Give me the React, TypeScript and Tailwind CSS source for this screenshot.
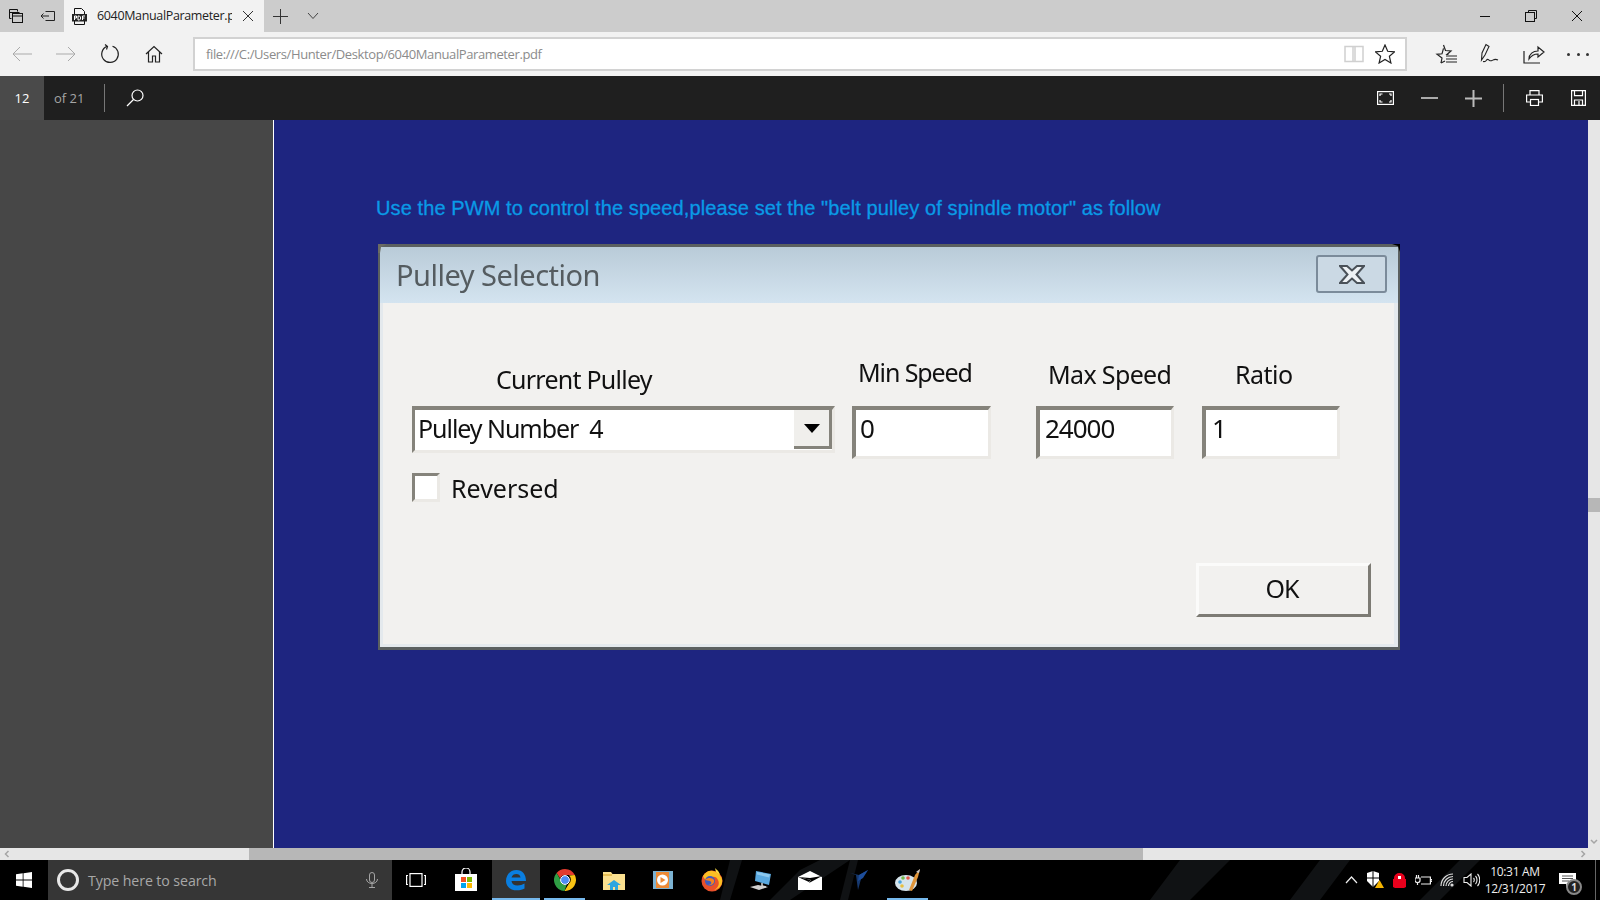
import React from "react";

const S = ({ w = 16, h = 16, vb, c = "#111", sw = 1, children }: { w?: number; h?: number; vb?: string; c?: string; sw?: number; children: React.ReactNode }) => (
  <svg width={w} height={h} viewBox={vb ?? `0 0 ${w} ${h}`} fill="none" stroke={c} strokeWidth={sw}>{children}</svg>
);

const IconBtn = ({ w = "w-11", children }: { w?: string; children: React.ReactNode }) => (
  <div className={`${w} h-full flex items-center justify-center shrink-0`}>{children}</div>
);

function TabStrip() {
  return (
    <div className="h-8 bg-[#cccccc] flex items-center shrink-0">
      <IconBtn w="w-8">
        <S><path d="M1.5 1.5h8v2M1.5 1.5v9h2M1.5 4.5h10" /><rect x="4.5" y="5.5" width="10" height="9" fill="#ccc" /><path d="M4.5 8h10" /></S>
      </IconBtn>
      <IconBtn w="w-8">
        <S c="#222"><path d="M5.5 3.5h9v9h-9M1 8h8M3.5 5.5 1 8l2.5 2.5" /></S>
      </IconBtn>
      <div className="w-[200px] h-full bg-[#f2f2f2] flex items-center shrink-0">
        <div className="ml-[7px] w-4 flex justify-center">
          <S w={15} h={17}><path d="M2.5 6V.5h7l3 3V6M2.5 13v3.5h10V13" /><rect x="0.5" y="6.5" width="14" height="6.5" fill="#222" stroke="#222" /><path d="M2.500 12V8h2v2h-2M6 8v4h1.500L8.500 11V9L7.500 8zM10.500 12V8H13M10.500 10h2" stroke="#fff" /></S>
        </div>
        <span className="ml-[10px] mt-[1px] w-[135px] overflow-hidden whitespace-nowrap text-[12.500px] text-[#222] font-['Open_Sans',sans-serif] tracking-[-0.35px]">6040ManualParameter.pdf</span>
        <div className="ml-2 w-4 flex justify-center">
          <S w={12} h={12} c="#333"><path d="M1 1l10 10M11 1 1 11" /></S>
        </div>
      </div>
      <div className="w-8 flex justify-center"><S w={15} h={15} c="#333"><path d="M7.500 0v15M0 7.500h15" /></S></div>
      <div className="w-8 ml-[1px] flex justify-center"><S w={12} h={8} c="#444"><path d="M1 1l5 5.500L11 1" /></S></div>
      <div className="flex-1" />
      <IconBtn w="w-[46px]"><S w={12} h={12} c="#111"><path d="M1 6.500h10" /></S></IconBtn>
      <IconBtn w="w-[46px]"><S w={12} h={12} c="#111"><path d="M3.500 2.500V.5h8v8h-2" /><rect x="0.5" y="2.500" width="9" height="9" fill="#ccc" /></S></IconBtn>
      <IconBtn w="w-[46px]"><S w={12} h={12} c="#111"><path d="M1 1l10 10M11 1 1 11" /></S></IconBtn>
    </div>
  );
}

function AddressRow() {
  return (
    <div className="h-11 bg-[#f2f2f2] flex items-center shrink-0">
      <IconBtn><S w={20} h={16} c="#aaa"><path d="M20 8H1M8 1 1 8l7 7" /></S></IconBtn>
      <IconBtn><S w={20} h={16} c="#aaa"><path d="M0 8h19M12 1l7 7-7 7" /></S></IconBtn>
      <IconBtn><S w={20} h={20} c="#222" sw={1.2}><path d="M12.500 2.200A8.300 8.300 0 1 1 7 2.400" /><path d="M5 .5l2.500 2-1 3" /></S></IconBtn>
      <IconBtn><S w={18} h={18} c="#222" sw={1.2}><path d="M1 9l8-7.500L17 9M3.500 7v10H7.500v-6h3v6h4V7" /></S></IconBtn>
      <div className="w-[1214px] ml-[17px] h-[34px] bg-white border-2 border-[#d2d2d2] flex items-center shrink-0">
        <span className="ml-[11px] mt-[1px] text-[13px] text-[#8b8b8b] font-['Open_Sans',sans-serif] tracking-[-0.39px] whitespace-nowrap">file:///C:/Users/Hunter/Desktop/6040ManualParameter.pdf</span>
        <div className="flex-1" />
        <div className="mr-[10px] flex items-center gap-[11px]">
          <S w={20} h={20} c="#d0d0d0" sw={1.5}><path d="M1 2.500h8v15H1zM11 2.500h8v15h-8zM9 2.500h2M1 17.500h18" /></S>
          <S w={20} h={20} c="#222" sw={1.2}><path d="M10 1l2.700 6.300 6.800.6-5.100 4.400 1.500 6.700L10 15.500 4.100 19l1.500-6.700L.5 7.900l6.800-.6z" /></S>
        </div>
      </div>
      <div className="w-[17px] shrink-0" />
      <IconBtn><S w={22} h={21} c="#222" sw={1.2}><path d="M8.500 1l2 5.500 5.500.5-4 3.500 1.500 0M6 19l1-5-5-3.700 5-.5 1.500-5.500" /><path d="M11 12h11M11 15h11M11 18h11M6 19l4-2" /></S></IconBtn>
      <IconBtn><S w={20} h={22} c="#222" sw={1.1}><path d="M6 1.500 2 10l-.5 7 3.500-5 4-8.500zM3 18.500c4 1 3-3 5-2s2 2 4 1 3-2 6-.5" /></S></IconBtn>
      <IconBtn><S w={22} h={20} c="#222" sw={1.2}><path d="M1 7v12h16M6 15c0-5 4-8 9-8V3l6 5-6 5V10c-4 0-7 2-9 5z" /></S></IconBtn>
      <IconBtn><div className="flex gap-[6.500px]"><i className="w-[3px] h-[3px] rounded-full bg-[#333]" /><i className="w-[3px] h-[3px] rounded-full bg-[#333]" /><i className="w-[3px] h-[3px] rounded-full bg-[#333]" /></div></IconBtn>
    </div>
  );
}

function PdfToolbar() {
  return (
    <div className="h-11 bg-[#1f1f1f] flex items-center shrink-0">
      <div className="w-11 h-full bg-[#4a4a4a] flex items-center justify-center pt-[1px] text-[13px] text-white font-['Open_Sans',sans-serif]">12</div>
      <span className="ml-[10px] mt-[1px] text-[13px] text-[#a5a5a5] font-['Open_Sans',sans-serif] whitespace-nowrap w-[50px]">of 21</span>
      <div className="w-px h-7 bg-[#777]" />
      <div className="ml-[21px]"><S w={18} h={18} c="#fff" sw={1.2}><circle cx="11.500" cy="6.500" r="5.500" /><path d="M7.500 10.500 1 17" /></S></div>
      <div className="flex-1" />
      <IconBtn><S w={17} h={14} c="#fff" sw={1.2}><rect x="0.600" y="0.600" width="15.800" height="12.800" /><path d="M3 5V3h2.500M12 3h2v2M3 9v2h2.500M14 9v2h-2" /></S></IconBtn>
      <IconBtn><S w={17} h={14} c="#aaa" sw={2}><path d="M0 7h17" /></S></IconBtn>
      <IconBtn><S w={17} h={17} c="#bbb" sw={2}><path d="M0 8.500h17M8.500 0v17" /></S></IconBtn>
      <div className="w-px h-7 bg-[#777] ml-[8px]" />
      <IconBtn w="w-[60px]"><S w={17} h={16} c="#fff" sw={1.2}><path d="M4 5V.6h9V5M4 12H.6V5h15.800v7H13" /><rect x="4.500" y="9.500" width="8" height="6" /></S></IconBtn>
      <IconBtn w="w-[29px]"><S w={15} h={16} c="#fff" sw={1.2}><path d="M.6.6h13.800v14.800H.6zM3.500.6v5h8v-5M3.500 15.400V10h8v5.400M8 11v4" /></S></IconBtn>
      <div className="w-[7px]" />
    </div>
  );
}

const Field = ({ w, text, tx = "ml-[4px]" }: { w: string; text: string; tx?: string }) => (
  <div className={`${w} h-[53px] bg-white border-t-[4px] border-l-[4px] border-b-[3px] border-r-[3px] border-t-[#85837b] border-l-[#85837b] border-b-[#ebe9e5] border-r-[#ebe9e5] flex items-start shrink-0`}>
    <span className={`${tx} mt-[3px] text-[26px] leading-[30px] text-[#111] tracking-[-1px] font-['Noto_Sans',sans-serif] blur-[0.3px]`}>{text}</span>
  </div>
);

function Dialog() {
  const txt = "font-['Noto_Sans',sans-serif] text-[#111] text-[25px] leading-[30px] whitespace-nowrap blur-[0.3px]";
  return (
    <div className="w-[1022px] h-[406px] mt-[22px] border-t-[3px] border-b-[3px] border-x-[2px] border-[#5b6060] bg-[#f2f1ef] flex flex-col relative">
      <div className="h-[56px] bg-gradient-to-b from-[#b9cbd8] to-[#d4e4f0] flex items-center shrink-0">
        <span className="ml-[16px] text-[#555c60] text-[29px] tracking-[-0.500px] font-['Noto_Sans',sans-serif] whitespace-nowrap blur-[0.4px]">Pulley Selection</span>
        <div className="flex-1" />
        <div className="w-[71px] h-[38px] mr-[11px] mt-[-2px] rounded-[3px] border-2 border-[#7b8b9a] bg-[#cbd9e4] flex items-center justify-center">
          <svg width="26" height="21" viewBox="0 0 26 21"><path d="M1 2h7l5 4.500L18 2h7l-7.500 8.500L25 19h-7l-5-4.500L8 19H1l7.500-8.500z" fill="#eef2f5" stroke="#4a5158" strokeWidth="2" /></svg>
        </div>
      </div>
      <div className="flex-1 border-l-[3px] border-r-[4px] border-b-[3px] border-[#e4e9ed] relative flex flex-col">
        <div className="flex ml-[29px] mt-[55px] h-[48px] items-end">
          <div className={`${txt} tracking-[-0.750px] w-[440px] pl-[84px] pb-[12px]`}>Current Pulley</div>
          <div className={`${txt} tracking-[-1.100px] w-[184px] pl-[6px] pb-[19px]`}>Min Speed</div>
          <div className={`${txt} tracking-[-0.650px] w-[166px] pl-[12px] pb-[17px]`}>Max Speed</div>
          <div className={`${txt} tracking-[-0.500px] pl-[33px] pb-[17px]`}>Ratio</div>
        </div>
        <div className="flex ml-[29px] items-start">
          <div className="w-[423px] h-[47px] bg-white border-t-[4px] border-l-[3px] border-r-[3px] border-b-[3px] border-t-[#85837b] border-l-[#85837b] border-r-[#ebe9e5] border-b-[#ebe9e5] flex items-center shrink-0">
            <span className={`${txt} ml-[3px] mt-[-4px] tracking-[-1.050px]`}>Pulley Number&nbsp; 4</span>
            <div className="flex-1" />
            <div className="w-[38px] h-[39px] mt-[-1px] bg-[#f0efec] border-r-[3px] border-b-[3px] border-[#85837b] flex items-center justify-center">
              <svg width="16" height="9" viewBox="0 0 16 9"><path d="M0 0h16L8 9z" fill="#000" /></svg>
            </div>
          </div>
          <div className="w-[17px] shrink-0" />
          <Field w="w-[139px]" text="0" />
          <div className="w-[45px] shrink-0" />
          <Field w="w-[138px]" text="24000" tx="ml-[5px]" />
          <div className="w-[28px] shrink-0" />
          <Field w="w-[138px]" text="1" tx="ml-[6px]" />
        </div>
        <div className="flex ml-[29px] mt-[13px] items-center">
          <div className="w-[28px] h-[29px] bg-white border-t-[3px] border-l-[3px] border-r-[3px] border-b-[3px] border-t-[#85837b] border-l-[#85837b] border-r-[#ebe9e5] border-b-[#ebe9e5]" />
          <span className={`${txt} tracking-[0px] ml-[11px] mt-[1px]`}>Reversed</span>
        </div>
        <div className="flex justify-end mr-[23px] mt-[60px]">
          <div className="w-[175px] h-[54px] border-t-[3px] border-l-[3px] border-r-[3px] border-b-[3px] border-t-[#fbfbfa] border-l-[#fbfbfa] border-r-[#7d7b74] border-b-[#7d7b74] flex items-center justify-center">
            <span className={`${txt} tracking-[-1.100px] ml-[-3px] mt-[-4px]`}>OK</span>
          </div>
        </div>
      </div>
      <svg className="absolute left-[-2px] top-[-3px]" width="10" height="10" viewBox="0 0 10 10"><path d="M0 0h9L3 3 2 9H0z" fill="#6b6b62" /></svg>
      <svg className="absolute right-[-2px] top-[-3px]" width="8" height="8" viewBox="0 0 8 8"><path d="M0 0h8v8L6 2z" fill="#000" /></svg>
    </div>
  );
}

function Viewer() {
  return (
    <div className="flex-1 flex min-h-0">
      <div className="w-[273px] bg-[#474747] shrink-0" />
      <div className="w-px bg-white shrink-0" />
      <div className="flex-1 bg-[#1e2580] pl-[104px] pt-[74px]">
        <div className="ml-[-2px] text-[20px] leading-[28px] font-['Liberation_Sans',sans-serif] text-[#0a9ae6] tracking-[0.1px] whitespace-nowrap [-webkit-text-stroke:0.3px_#0a9ae6]">Use the PWM to control the speed,please set the "belt pulley of spindle motor" as follow</div>
        <Dialog />
      </div>
      <div className="w-3 bg-[#e6e6e6] shrink-0 flex flex-col">
        <div className="h-[378px]" />
        <div className="h-[14px] bg-[#b7b7b7]" />
        <div className="flex-1" />
        <div className="h-3 flex items-center justify-center"><S w={8} h={6} c="#a5a5a5" sw={1.5}><path d="M1 1l3 3 3-3" /></S></div>
      </div>
    </div>
  );
}

function HScroll() {
  return (
    <div className="h-3 bg-[#e6e6e6] flex items-center shrink-0">
      <div className="w-[249px] pl-[4px] flex items-center"><S w={6} h={8} c="#a5a5a5" sw={1.5}><path d="M4.500 1l-3 3 3 3" /></S></div>
      <div className="w-[894px] h-full bg-[#b7b7b7]" />
      <div className="flex-1" />
      <div className="mr-[14px] flex items-center"><S w={6} h={8} c="#a5a5a5" sw={1.5}><path d="M1.500 1l3 3-3 3" /></S></div>
    </div>
  );
}

const TB = ({ w = "w-[49px]", active, on, children }: { w?: string; active?: boolean; on?: boolean; children: React.ReactNode }) => (
  <div className={`${w} h-full relative flex items-center justify-center shrink-0 ${active ? "bg-[#333333]" : ""}`}>
    {children}
    {on && <div className={`absolute bottom-0 h-[2px] bg-[#76b9ed] ${active ? "inset-x-0" : "inset-x-1"}`} />}
  </div>
);

function Taskbar() {
  return (
    <div className="h-10 bg-black flex shrink-0 relative overflow-hidden">
      <svg className="absolute inset-0 pointer-events-none" width="1600" height="40" viewBox="0 0 1600 40">
        <g fill="#101214">
          <path d="M720 40l10-40h12l-12 40zM770 40l30-30 20-10h30l-60 40zM840 40l10-40h8l-10 40zM1150 40l30-40h50l-40 40zM1290 40l30-40h30l-30 40zM1420 40l40-40h20l-40 40z" />
        </g>
      </svg>
      <div className="w-12 h-full flex items-center justify-center relative">
        <svg width="16" height="16" viewBox="0 0 16 16" fill="#fff"><path d="M0 2.300 6.700 1.300v6.300H0zM7.500 1.200 16 0v7.600H7.500zM0 8.400h6.700v6.300L0 13.700zM7.500 8.400H16V16l-8.500-1.200z" /></svg>
      </div>
      <div className="w-[344px] h-full bg-[#363636] flex items-center relative">
        <div className="ml-[9px] w-[22px] h-[22px] rounded-full border-[3px] border-[#e8e8e8]" />
        <span className="ml-[9px] mt-[1px] text-[14.200px] text-[#a8a8a8] font-['Open_Sans',sans-serif] tracking-[-0.1px] whitespace-nowrap">Type here to search</span>
        <div className="flex-1" />
        <div className="mr-[14px]">
          <S w={12} h={16} c="#a5a5a5"><rect x="3.500" y="0.500" width="5" height="10" rx="2.500" /><path d="M.5 7c0 6 11 6 11 0M6 12v3.500M3 15.500h6" /></S>
        </div>
      </div>
      <TB w="w-12">
        <S w={20} h={14} c="#fff" sw={1.2}><rect x="4" y="0.600" width="12" height="12.800" /><path d="M2 2.500H.6v9H2M18 2.500h1.400v9H18" /></S>
      </TB>
      <TB w="w-[52px]">
        <svg width="24" height="24" viewBox="0 0 24 24">
          <path d="M8 6V4a4 4 0 0 1 8 0v2" fill="none" stroke="#fff" strokeWidth="1.200" />
          <path d="M1 6h22v17H1z" fill="#fff" />
          <rect x="7" y="9" width="5" height="5" fill="#f25022" /><rect x="13" y="9" width="5" height="5" fill="#7fba00" />
          <rect x="7" y="15" width="5" height="5" fill="#00a4ef" /><rect x="13" y="15" width="5" height="5" fill="#ffb900" />
        </svg>
      </TB>
      <TB w="w-12" active on>
        <svg width="22" height="22" viewBox="0 0 22 22"><path d="M1 12C1 5 6 1 11.500 1 17.500 1 21 5.500 21 12H6.500c.3 3 2.800 4.500 6 4.500 2.500 0 5-.8 7-2v5c-2 1-4.500 1.800-7.500 1.800C5.500 21.300 1 17.500 1 12zm5.500-3.500h9C15.300 6 13.500 5 11.300 5 9 5 7.200 6 6.500 8.500z" fill="#0a7ee0" /></svg>
      </TB>
      <TB on>
        <svg width="22" height="22" viewBox="0 0 22 22">
          <path d="M11 0a11 11 0 0 1 9.800 6H11a5 5 0 0 0-4.800 3.500L2.600 4A11 11 0 0 1 11 0z" fill="#e33b2e" />
          <path d="M20.800 6A11 11 0 0 1 10.500 22l4.600-7.800A5 5 0 0 0 15 6.500z" fill="#f9c313" />
          <path d="M10.500 22A11 11 0 0 1 2.600 4l4.500 8a5 5 0 0 0 5.500 3.800z" fill="#2f9e44" />
          <circle cx="11" cy="11" r="4.400" fill="#4e8df5" stroke="#fff" strokeWidth="1" />
        </svg>
      </TB>
      <TB>
        <svg width="22" height="19" viewBox="0 0 22 19">
          <path d="M0 1h8l1.500 2H22v16H0z" fill="#fbe08f" />
          <path d="M0 3h9v2H0z" fill="#e8c056" />
          <path d="M7 19v-5h-3l7-5 7 5h-3v5h-3v-3h-2v3z" fill="#2ea6e0" />
        </svg>
      </TB>
      <TB>
        <svg width="20" height="20" viewBox="0 0 20 20">
          <rect x="0" y="1" width="20" height="18" fill="#7cb2d2" />
          <rect x="3" y="2" width="13" height="16" fill="#ed8a35" />
          <circle cx="9.500" cy="10" r="5.500" fill="#fff" />
          <path d="M7.500 7l5 3-5 3z" fill="#ed8a35" />
        </svg>
      </TB>
      <TB>
        <svg width="24" height="24" viewBox="0 0 24 24">
          <circle cx="12" cy="13" r="10.500" fill="#e8502a" />
          <path d="M3 8c3-5 7-6 10-5 5 1 8 5 9 8 1 5-2 10-8 11 4-2 6-6 4-10-1-3-4-4-6-3 2 1 3 3 1 5-2 1-5 0-6-2-1 0-3-1-4-4z" fill="#fbbf24" />
          <circle cx="10" cy="13" r="5" fill="#3f5bbd" />
          <path d="M5 12c3-3 8-2 9 0 1 3-2 6-6 5 4 0 4-3 2-4z" fill="#f58220" />
          <path d="M15 0c2 2 4 3 5 7l-4-3z" fill="#fde047" />
        </svg>
      </TB>
      <TB>
        <svg width="24" height="24" viewBox="0 0 24 24">
          <path d="M7 3l15 3-2 11-14-4z" fill="#5aa9e0" />
          <path d="M8 4l13 2.500-1 3-12-3z" fill="#8cc8ee" />
          <path d="M13 15v3l4 1" stroke="#d8d8d8" strokeWidth="1.500" fill="none" />
          <path d="M1 19l8-2 10 2-9 3z" fill="#d0d0d0" />
        </svg>
      </TB>
      <TB>
        <svg width="24" height="19" viewBox="0 0 24 19">
          <path d="M0 6 12 0l12 6v13H0z" fill="#fff" />
          <path d="M0 6l13 3-2 3 13-7-12 2z" fill="#000" />
          <path d="M0 6l11 5 2-2z" fill="#000" />
        </svg>
      </TB>
      <TB>
        <svg width="18" height="20" viewBox="0 0 18 20">
          <path d="M0 3l6 2 2 15 3-11 7-9-9 5z" fill="#16386e" />
          <path d="M9 5l9-5-5 8-5 3z" fill="#1d4d9a" />
        </svg>
      </TB>
      <TB on>
        <svg width="26" height="25" viewBox="0 0 26 25">
          <ellipse cx="11" cy="15" rx="11" ry="8" fill="#d6e4ec" />
          <circle cx="5" cy="14" r="1.800" fill="#4aa4dc" />
          <circle cx="8" cy="10" r="1.800" fill="#74b84a" />
          <circle cx="13" cy="10" r="1.800" fill="#e2564a" />
          <circle cx="7" cy="18" r="1.800" fill="#e8c040" />
          <path d="M25 1 20 7l-6 15 3 1 6-14 2-8z" fill="#e0953a" />
          <path d="M21 4l3 1 1-4z" fill="#c9c9c9" />
        </svg>
      </TB>
      <div className="flex-1" />
      <div className="h-full flex items-center relative">
        <div className="w-6 flex justify-center"><S w={13} h={8} c="#eee" sw={1.2}><path d="M1 7l5.500-6L12 7" /></S></div>
        <div className="w-6 flex justify-center">
          <svg width="17" height="18" viewBox="0 0 17 18"><path d="M0 2l6-2 6 2v8l-6 6-6-6z" fill="#fff" /><path d="M6 0v16M0 7h12" stroke="#000" strokeWidth="1" /><path d="M8 17l4.500-8 4.500 8z" fill="#f5b400" /></svg>
        </div>
        <div className="w-6 flex justify-center">
          <svg width="13" height="15" viewBox="0 0 13 15"><path d="M1 6V5a5.500 5 0 0 1 11 0v1h1v8l-2 1H2l-2-1V6z" fill="#e8001c" /><rect x="5" y="3" width="3" height="3" fill="#fff" /></svg>
        </div>
        <div className="w-6 flex justify-center">
          <S w={17} h={12} c="#eee" sw={1.2}><path d="M6 3h9.400v7H6M15.400 5.500H17v2h-1.600M0 4h5v2.500a2.500 2 0 0 1-5 0zM1.500 1v3M3.500 1v3M2.500 9v2" /></S>
        </div>
        <div className="w-6 flex justify-center">
          <S w={14} h={14} c="#ddd" sw={1.2}><path d="M1 13a12 12 0 0 1 12-12M3.500 13a9.500 9.500 0 0 1 9.500-9.500M6 13a7 7 0 0 1 7-7M8.500 13a4.500 4.500 0 0 1 4.500-4.500" /><circle cx="12" cy="12" r="1" fill="#fff" /></S>
        </div>
        <div className="w-6 flex justify-center">
          <S w={17} h={14} c="#eee" sw={1.1}><path d="M1 4.500h3L8 1v12L4 9.500H1zM10.500 5c1 1 1 3 0 4M12.500 3c2 2 2 6 0 8M14.500 1c3 3 3 9 0 12" /></S>
        </div>
        <div className="w-[64px] text-center text-[12px] leading-[17px] text-[#eee] font-['Open_Sans',sans-serif] tracking-[-0.3px] whitespace-nowrap">
          <div>10:31 AM</div>
          <div>12/31/2017</div>
        </div>
        <div className="w-[40px] h-full flex items-center justify-center relative">
          <svg width="17" height="15" viewBox="0 0 17 15"><path d="M0 0h17v11h-7l-3 4v-4H0z" fill="#fff" /><path d="M3 3h11M3 5.500h11M3 8h7" stroke="#555" strokeWidth="1" /></svg>
          <div className="absolute left-[19px] top-[19px] w-4 h-4 rounded-full border-2 border-[#888] bg-[#222] text-[10px] leading-[12px] text-center text-[#ddd] font-['Open_Sans',sans-serif] font-bold">1</div>
        </div>
        <div className="w-px h-full bg-[#666] ml-[8px] mr-[4px]" />
      </div>
    </div>
  );
}

export default function App() {
  return (
    <div className="w-[1600px] h-[900px] flex flex-col overflow-hidden">
      <TabStrip />
      <AddressRow />
      <PdfToolbar />
      <Viewer />
      <HScroll />
      <Taskbar />
    </div>
  );
}
